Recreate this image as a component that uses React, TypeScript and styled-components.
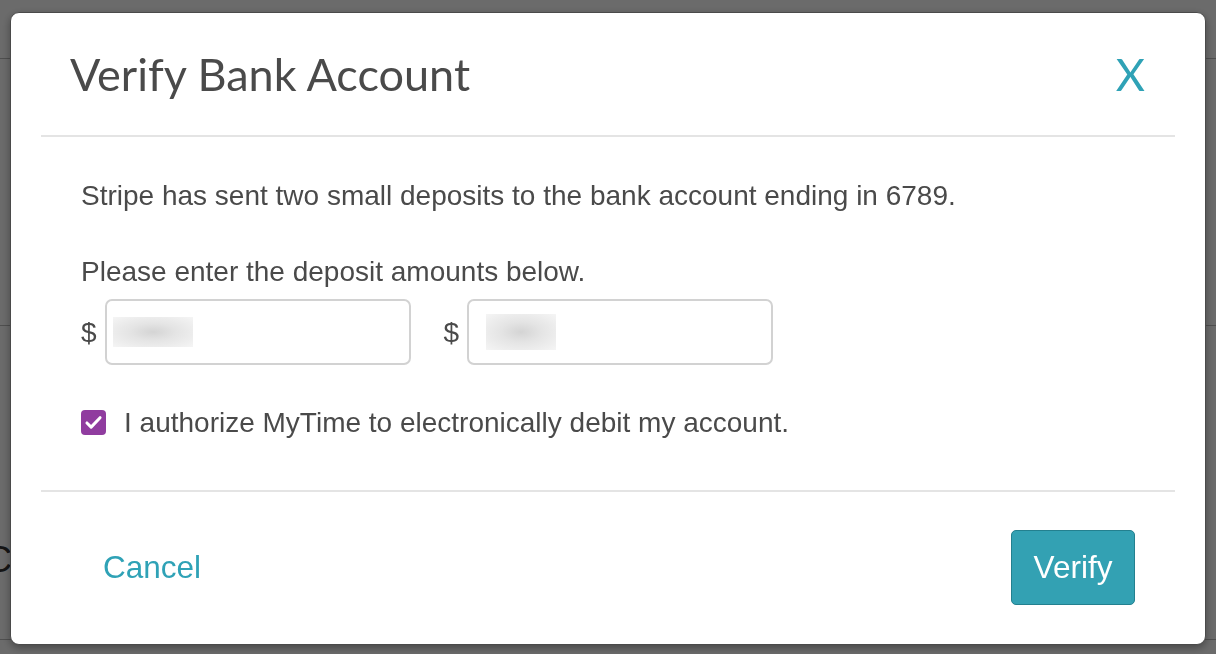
import * as React from 'react';
import styled, { createGlobalStyle } from 'styled-components';

const GlobalStyle = createGlobalStyle`
  html, body {
    margin: 0;
    padding: 0;
    background: #fff;
  }
  body {
    font-family: 'Liberation Sans', Arial, sans-serif;
    overflow: hidden;
  }
`;

// <editor-fold desc="Background page">
const PageBehind = styled.div`
  width: 1216px;
  height: 654px;
  background: #fff;
`;

const PageHeader = styled.div`
  height: 58px;
  border-bottom: 1px solid #bcbcbc;
`;

const PageSection = styled.div`
  height: 266px;
  border-bottom: 1px solid #bcbcbc;
`;

const PageRow = styled.div`
  height: 314px;
  display: flex;
  align-items: flex-end;
  border-bottom: 1px solid #bcbcbc;
  padding-bottom: 58px;
  box-sizing: border-box;
`;

const PageHeading = styled.span`
  font-size: 36px;
  color: #333;
  margin-left: -14px;
`;
// </editor-fold>

// <editor-fold desc="Modal">
const Overlay = styled.div`
  position: fixed;
  inset: 0;
  background: rgba(0, 0, 0, 0.58);
  padding: 12px 10px 9px 10px;
  box-sizing: border-box;
  display: flex;
`;

const Modal = styled.div`
  flex: 1;
  background: #fff;
  border: 1px solid #4a4a4a;
  border-radius: 9px;
  box-shadow: 0 3px 8px rgba(0, 0, 0, 0.35);
  padding: 0 30px;
  display: flex;
  flex-direction: column;
  box-sizing: border-box;
`;

const Header = styled.div`
  height: 122px;
  display: flex;
  align-items: center;
  justify-content: space-between;
  border-bottom: 2px solid #e4e4e4;
  padding: 0 30px 0 29px;
`;

const Title = styled.h1`
  margin: 0;
  font-family: Lato, 'Open Sans', sans-serif;
  font-weight: 400;
  font-size: 45px;
  line-height: 1;
  color: #4a4a4a;
`;

const CloseButton = styled.button`
  border: none;
  background: none;
  padding: 0;
  font-family: Lato, 'Open Sans', sans-serif;
  font-size: 45px;
  line-height: 1;
  color: #2fa2b6;
  cursor: pointer;
`;

const Body = styled.div`
  padding: 41px 40px 50px 40px;
  border-bottom: 2px solid #e4e4e4;
  display: flex;
  flex-direction: column;
  color: #4a4a4a;
  font-size: 28px;
  line-height: 35px;
`;

const Paragraph = styled.p`
  margin: 0 0 ${(p: { $gap?: number }) => p.$gap ?? 0}px;
`;

const AmountRow = styled.div`
  display: flex;
  align-items: center;
  gap: 33px;
`;

const AmountField = styled.label`
  display: flex;
  align-items: center;
  gap: 8px;
`;

const Dollar = styled.span`
  font-size: 28px;
  color: #4a4a4a;
`;

const InputBox = styled.div`
  width: 306px;
  height: 66px;
  border: 2px solid #d2d2d2;
  border-radius: 7px;
  box-sizing: border-box;
  display: flex;
  align-items: center;
  padding-left: ${(p: { $indent: number }) => p.$indent}px;
`;

const BlurredValue = styled.span<{ $w: number; $h: number }>`
  display: block;
  width: ${(p) => p.$w}px;
  height: ${(p) => p.$h}px;
  background: radial-gradient(ellipse at center, #d4d4d4 0%, #e4e4e4 40%, #f5f5f5 100%);
`;

const CheckRow = styled.label`
  display: flex;
  align-items: center;
  gap: 18px;
  margin-top: 40px;
  cursor: pointer;
`;

const CheckBox = styled.span`
  width: 25px;
  height: 25px;
  border-radius: 4px;
  background: #903c9f;
  display: flex;
  align-items: center;
  justify-content: center;
  flex-shrink: 0;
`;

const Footer = styled.div`
  flex: 1;
  display: flex;
  align-items: center;
  justify-content: space-between;
  padding: 0 40px 2px 62px;
`;

const CancelLink = styled.button`
  border: none;
  background: none;
  padding: 0;
  font-family: 'Liberation Sans', Arial, sans-serif;
  font-size: 31.5px;
  color: #2fa2b6;
  cursor: pointer;
`;

const PrimaryButton = styled.button`
  width: 124px;
  height: 75px;
  border: 1px solid #23808f;
  border-radius: 5px;
  background: #33a1b3;
  color: #fff;
  font-family: 'Liberation Sans', Arial, sans-serif;
  font-size: 31.5px;
  cursor: pointer;
`;
// </editor-fold>

export default function App() {
  return (
    <>
      <GlobalStyle />
      <PageBehind>
        <PageHeader />
        <PageSection />
        <PageRow>
          <PageHeading>C</PageHeading>
        </PageRow>
      </PageBehind>
      <Overlay>
        <Modal>
          <Header>
            <Title>Verify Bank Account</Title>
            <CloseButton>X</CloseButton>
          </Header>
          <Body>
            <Paragraph $gap={41}>
              Stripe has sent two small deposits to the bank account ending in 6789.
            </Paragraph>
            <Paragraph $gap={10}>Please enter the deposit amounts below.</Paragraph>
            <AmountRow>
              <AmountField>
                <Dollar>$</Dollar>
                <InputBox $indent={6}>
                  <BlurredValue $w={80} $h={30} />
                </InputBox>
              </AmountField>
              <AmountField>
                <Dollar>$</Dollar>
                <InputBox $indent={17}>
                  <BlurredValue $w={70} $h={36} />
                </InputBox>
              </AmountField>
            </AmountRow>
            <CheckRow>
              <CheckBox>
                <svg width="21" height="21" viewBox="0 0 24 24" fill="none">
                  <path d="M4.5 12.5l4.8 4.8L19.5 6.5" stroke="#fff" strokeWidth="3.4" strokeLinecap="round" strokeLinejoin="round" />
                </svg>
              </CheckBox>
              <span>I authorize MyTime to electronically debit my account.</span>
            </CheckRow>
          </Body>
          <Footer>
            <CancelLink>Cancel</CancelLink>
            <PrimaryButton>Verify</PrimaryButton>
          </Footer>
        </Modal>
      </Overlay>
    </>
  );
}
